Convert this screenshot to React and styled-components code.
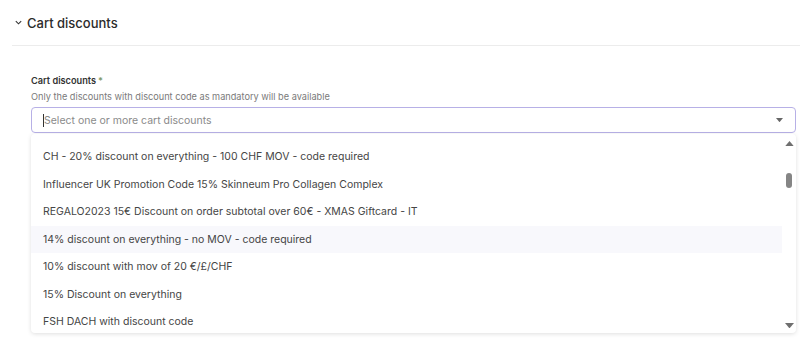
import React from 'react';
import styled, { createGlobalStyle } from 'styled-components';

const GlobalStyle = createGlobalStyle`
  body {
    margin: 0;
    background: #ffffff;
    font-family: Inter, "Liberation Sans", sans-serif;
  }
`;

const Page = styled.div`
  height: 338px;
  overflow: hidden;
  padding-left: 12px;
`;

const SectionHeader = styled.div`
  height: 46px;
  display: flex;
  align-items: center;
  gap: 4px;
  padding-left: 2px;
  box-sizing: border-box;
  border-bottom: 1px solid #ececec;
  color: #2b2b2b;
  font-size: 13px;
  font-weight: 500;
`;

const Field = styled.div`
  padding: 28px 4px 0 19px;
`;

const Label = styled.div`
  font-size: 9.2px;
  line-height: 14px;
  font-weight: 600;
  color: #333;
`;

const Required = styled.span`
  color: #7f9a6c;
  margin-left: 2px;
`;

const Hint = styled.div`
  margin-top: 2px;
  font-size: 9.2px;
  line-height: 14px;
  color: #7a7a7a;
`;

const SelectBox = styled.div`
  margin-top: 3px;
  height: 26px;
  box-sizing: border-box;
  border: 1px solid #b7b0e6;
  border-radius: 4px;
  display: flex;
  align-items: center;
  padding: 0 12px 0 11px;
  font-size: 10.5px;
  color: #8a8a8a;
`;

const Caret = styled.span`
  width: 1px;
  height: 13px;
  background: #333;
`;

const Placeholder = styled.span`
  flex: 1;
`;

const Menu = styled.div`
  margin-top: 1px;
  height: 199px;
  display: flex;
  border-radius: 4px;
  background: #fff;
  box-shadow: 0 1px 4px rgba(0, 0, 0, 0.13);
  overflow: hidden;
`;

const Options = styled.div`
  flex: 1;
  padding-top: 9px;
`;

const Option = styled.div`
  height: 27.5px;
  display: flex;
  align-items: center;
  padding-left: 12px;
  font-size: 10.5px;
  color: #454545;
  background: ${(p) => (p.$active ? '#f8f8fc' : 'transparent')};
`;

const Scrollbar = styled.div`
  width: 14px;
  display: flex;
  flex-direction: column;
  align-items: center;
  padding: 7px 0 5px;
  box-sizing: border-box;
`;

const Track = styled.div`
  flex: 1;
  display: flex;
  flex-direction: column;
  align-items: center;
  padding-top: 27px;
`;

const Thumb = styled.div`
  width: 6px;
  height: 15px;
  border-radius: 3px;
  background: #858585;
`;

const Arrow = ({ down, size = 8, color = '#707070' }) => (
  <svg width={size} height={size * 0.6} viewBox="0 0 10 6">
    <path d={down ? 'M0 0 L10 0 L5 6 Z' : 'M0 6 L10 6 L5 0 Z'} fill={color} />
  </svg>
);

const Chevron = () => (
  <svg width="9" height="9" viewBox="0 0 10 10">
    <path d="M2 3.5 L5 6.5 L8 3.5" fill="none" stroke="#333" strokeWidth="1.2" />
  </svg>
);

const options = [
  'CH - 20% discount on everything - 100 CHF MOV - code required',
  'Influencer UK Promotion Code 15% Skinneum Pro Collagen Complex',
  'REGALO2023 15€ Discount on order subtotal over 60€ - XMAS Giftcard - IT',
  '14% discount on everything - no MOV - code required',
  '10% discount with mov of 20 €/£/CHF',
  '15% Discount on everything',
  'FSH DACH with discount code',
];

export default function App() {
  return (
    <>
      <GlobalStyle />
      <Page>
        <SectionHeader>
          <Chevron />
          Cart discounts
        </SectionHeader>
        <Field>
          <Label>
            Cart discounts<Required>*</Required>
          </Label>
          <Hint>Only the discounts with discount code as mandatory will be available</Hint>
          <SelectBox>
            <Caret />
            <Placeholder>Select one or more cart discounts</Placeholder>
            <Arrow down size={7} color="#666" />
          </SelectBox>
          <Menu>
            <Options>
              {options.map((o, i) => (
                <Option key={i} $active={i === 3}>{o}</Option>
              ))}
            </Options>
            <Scrollbar>
              <Arrow size={9} color="#6f6f6f" />
              <Track>
                <Thumb />
              </Track>
              <Arrow down size={9} color="#6f6f6f" />
            </Scrollbar>
          </Menu>
        </Field>
      </Page>
    </>
  );
}
